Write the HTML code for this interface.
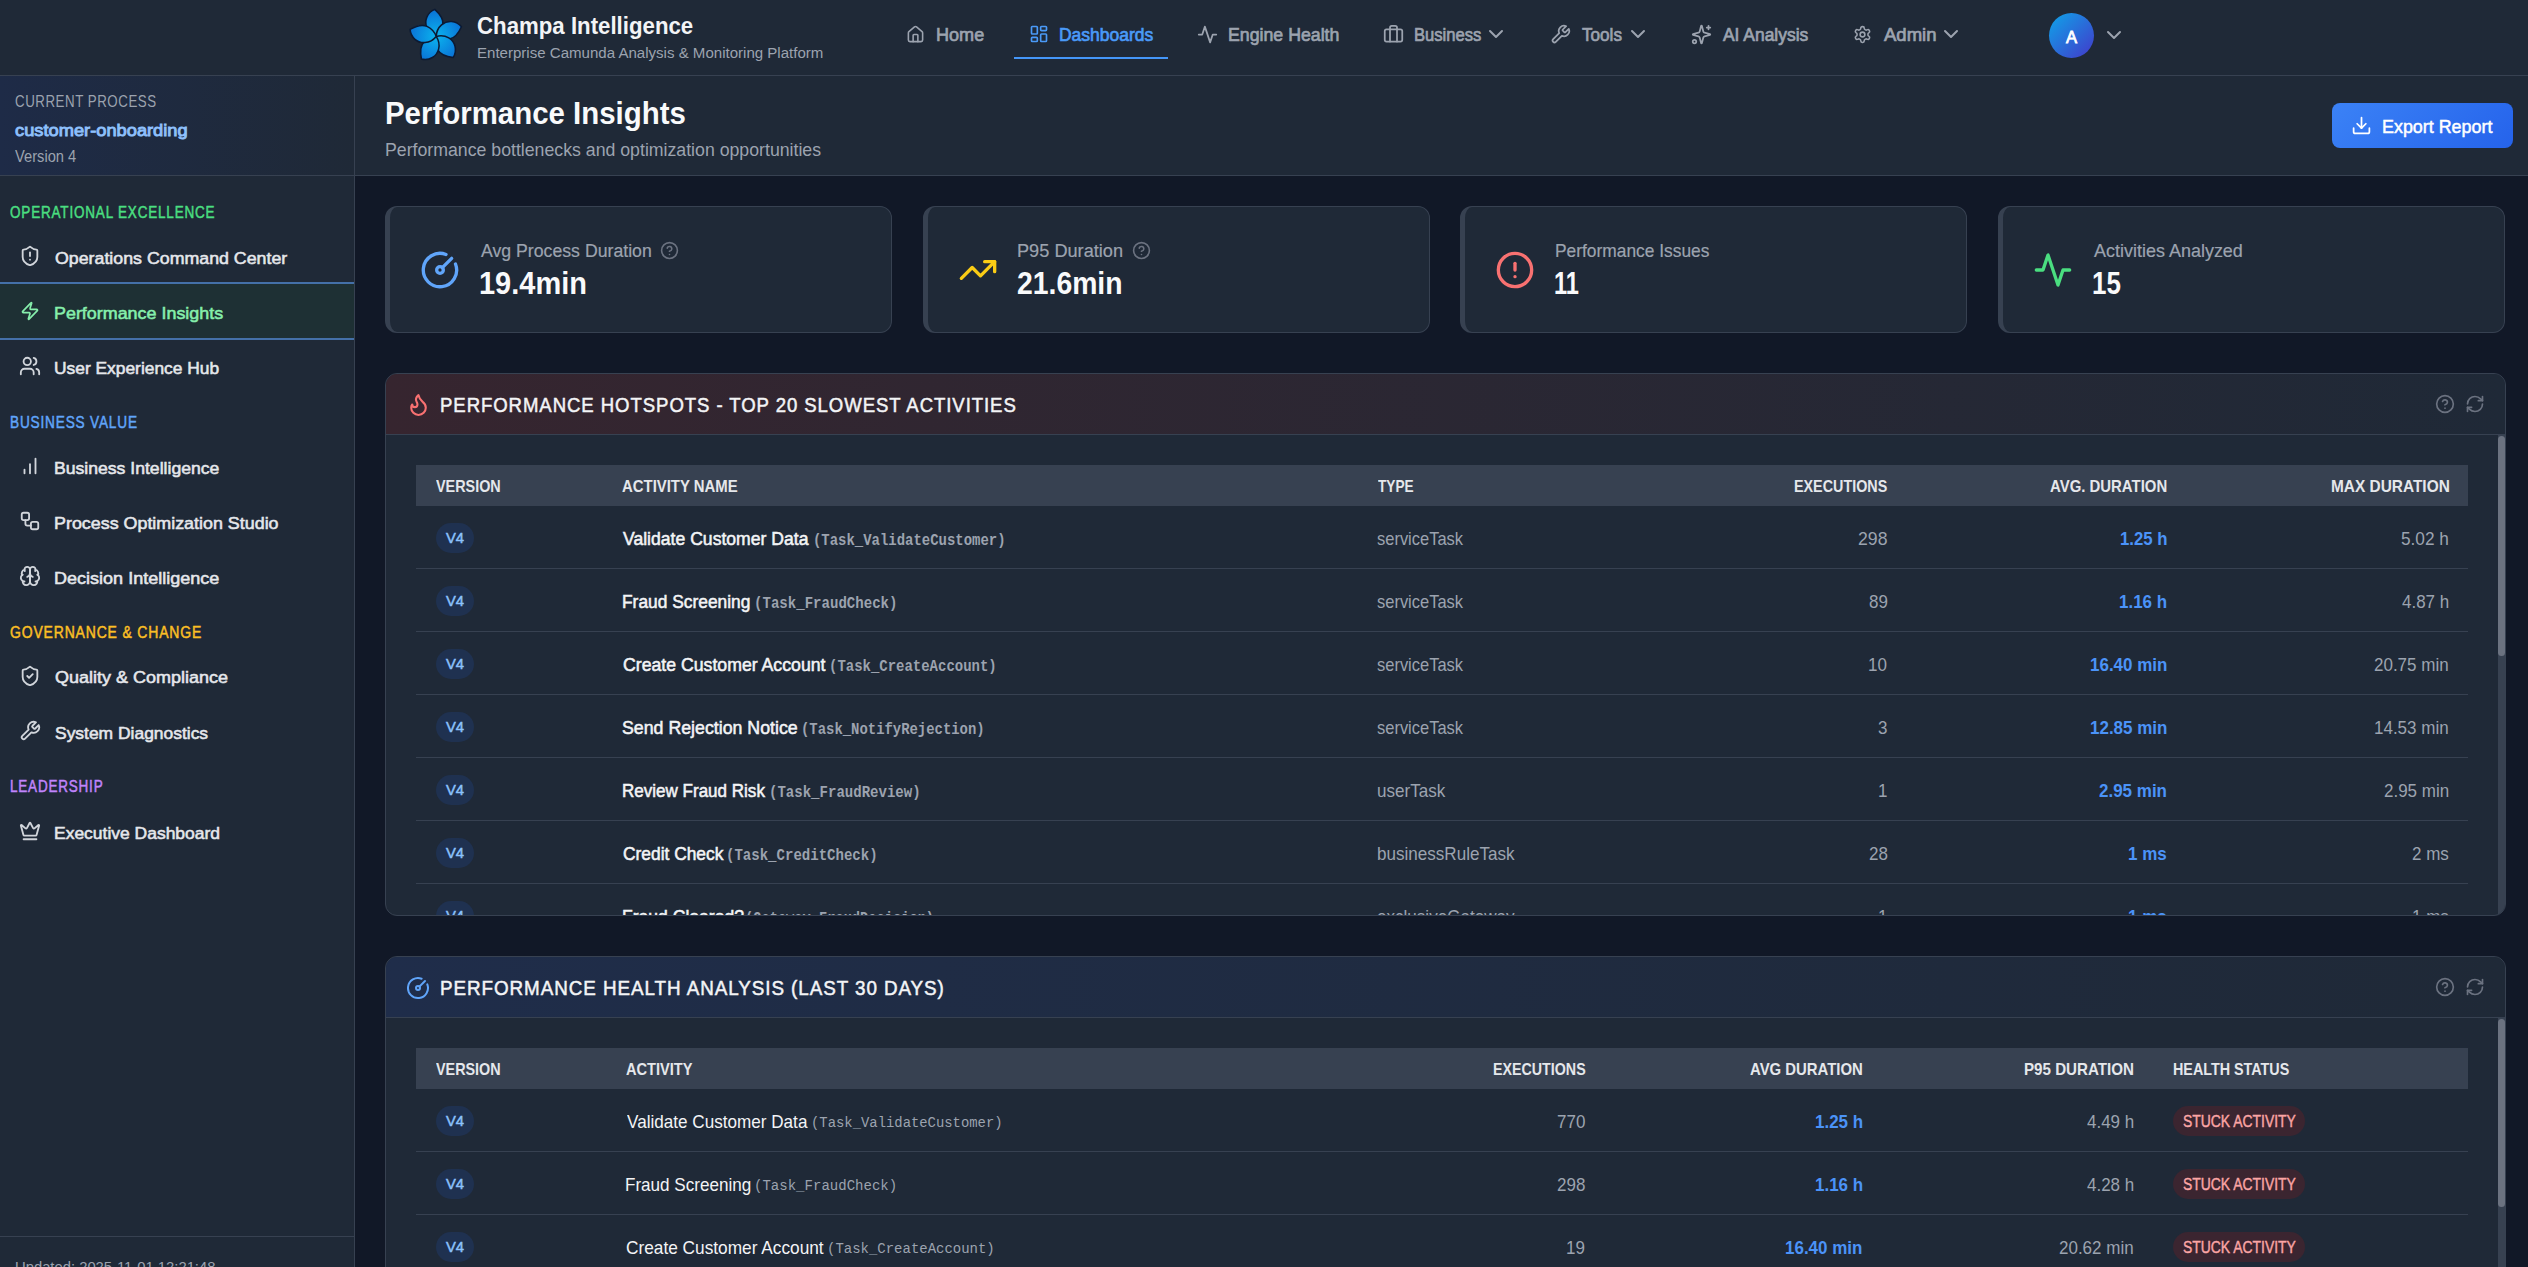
<!DOCTYPE html>
<html><head><meta charset="utf-8">
<style>
*{box-sizing:border-box;margin:0;padding:0}
html,body{width:2528px;height:1267px;overflow:hidden;background:#111827;font-family:"Liberation Sans",sans-serif;color:#f3f4f6}
.abs{position:absolute}
svg{display:block}
.ic{fill:none;stroke:currentColor;stroke-width:2;stroke-linecap:round;stroke-linejoin:round}
.t{position:absolute;white-space:nowrap;line-height:1}
/* top bar */
#top{position:absolute;left:0;top:0;width:2528px;height:76px;background:#1f2937;border-bottom:1px solid #374151}
.nav{position:absolute;top:0;height:75px;color:#9ca3af}
/* sidebar */
#side{position:absolute;left:0;top:76px;width:355px;height:1191px;background:#1f2937;border-right:1px solid #374151}
.sh{position:absolute;left:10px;font-weight:700;font-size:14.4px;white-space:nowrap;line-height:1}
.si{position:absolute;left:0;width:354px;height:54px}
.si svg{position:absolute;left:19px;top:15px;width:22px;height:22px;color:#d1d5db}
.si span{position:absolute;left:55px;top:19px;font-weight:700;font-size:16.4px;color:#e5e7eb;white-space:nowrap;line-height:1}
/* main */
#hdr{position:absolute;left:355px;top:76px;width:2173px;height:100px;background:#1f2937;border-bottom:1px solid #374151}
.kpi{position:absolute;top:206px;width:507px;height:127px;background:#1f2937;border:1px solid #374151;border-left:5px solid #374151;border-radius:12px}
.card{position:absolute;left:385px;width:2121px;background:#1f2937;border:1px solid #374151;border-radius:12px;overflow:hidden}
.chd{position:absolute;left:0;top:0;width:2119px;height:61px;border-bottom:1px solid #374151}
table{border-collapse:collapse;position:absolute;left:30px;width:2052px}
th{background:#374151;height:40px;border-bottom:1px solid #374151;font-size:14.4px;font-weight:700;color:#e5e7eb;text-align:left;padding:0 20px;white-space:nowrap}
td{height:63px;border-bottom:1px solid #374151;padding:5px 20px 0 20px;font-size:16.6px;color:#9ca3af;white-space:nowrap}
.r{text-align:right}
.badge{display:inline-block;vertical-align:middle;width:38px;height:30px;line-height:31px;border-radius:15px;background:#1f3150;color:#8cc2fc;font-weight:700;font-size:15px;text-align:center;position:relative;top:-2px}
.nm{font-weight:700;color:#f3f4f6;font-size:16.5px}
.nm2{color:#f3f4f6;font-size:17.1px}
.mono{font-family:"Liberation Mono",monospace;font-size:13.7px;font-weight:700;color:#9ca3af;margin-left:6px}
.blue{color:#60a5fa;font-weight:700}
.stuck{display:inline-block;vertical-align:middle;width:132px;text-align:center;height:29px;line-height:30px;border-radius:15px;background:#3f2430;color:#fca5a5;font-weight:700;font-size:13.9px;position:relative;top:-2px}
.tx{position:absolute;white-space:pre;line-height:1;transform-origin:0 0;font-family:"Liberation Sans",sans-serif}
.bdg{position:absolute;width:38px;height:30px;border-radius:15px;background:#1f3150}
.stk{position:absolute;width:132px;height:30px;border-radius:15px;background:#3b2530}
</style></head><body>

<!-- TOP BAR -->
<div id="top">
  <svg class="abs" style="left:405px;top:6px" width="62" height="62" viewBox="0 0 62 62">
    <defs><radialGradient id="pg" gradientUnits="userSpaceOnUse" cx="0" cy="0" r="27"><stop offset="0" stop-color="#0bb4ee"/><stop offset="1" stop-color="#0a6fd6"/></radialGradient></defs>
    <g transform="translate(31.2,30.4) rotate(-3) scale(1.04)" fill="url(#pg)" stroke="#0c1a33" stroke-width="1.5" stroke-linejoin="round">
      <path id="pet" d="M0,0 C-9,-4 -11,-13 -8,-19 C-6,-23 -3,-25 0,-26 C4,-22 8,-17 7,-11 C6,-6 3,-2 0,0Z"/>
      <use href="#pet" transform="rotate(72)"/>
      <use href="#pet" transform="rotate(144)"/>
      <use href="#pet" transform="rotate(216)"/>
      <use href="#pet" transform="rotate(288)"/>
    </g>
  </svg>

  <!-- nav items -->
  <svg class="abs ic" style="left:906px;top:25px;color:#9ca3af" width="19" height="19" viewBox="0 0 24 24" stroke-width="1.7"><path d="M15 21v-8a1 1 0 0 0-1-1h-4a1 1 0 0 0-1 1v8"/><path d="M3 10a2 2 0 0 1 .709-1.528l7-5.999a2 2 0 0 1 2.582 0l7 5.999A2 2 0 0 1 21 10v9a2 2 0 0 1-2 2H5a2 2 0 0 1-2-2z"/></svg>

  <svg class="abs ic" style="left:1029px;top:24px;color:#4a9af8" width="20" height="20" viewBox="0 0 24 24" stroke-width="1.7"><rect width="7" height="9" x="3" y="3" rx="1"/><rect width="7" height="5" x="14" y="3" rx="1"/><rect width="7" height="9" x="14" y="12" rx="1"/><rect width="7" height="5" x="3" y="16" rx="1"/></svg>
  <div class="abs" style="left:1014px;top:57px;width:154px;height:2px;background:#4496f8"></div>

  <svg class="abs ic" style="left:1197px;top:24px;color:#9ca3af" width="21" height="21" viewBox="0 0 24 24" stroke-width="1.7"><polyline points="22 12 18 12 15 21 9 3 6 12 2 12"/></svg>

  <svg class="abs ic" style="left:1383px;top:24px;color:#9ca3af" width="21" height="21" viewBox="0 0 24 24" stroke-width="1.7"><path d="M16 20V4a2 2 0 0 0-2-2h-4a2 2 0 0 0-2 2v16"/><rect width="20" height="14" x="2" y="6" rx="2"/></svg>
  <svg class="abs ic" style="left:1484px;top:22px;color:#9ca3af" width="24" height="24" stroke-width="1.7" viewBox="0 0 24 24"><path d="m6 9 6 6 6-6"/></svg>

  <svg class="abs ic" style="left:1550px;top:24px;color:#9ca3af" width="21" height="21" viewBox="0 0 24 24" stroke-width="1.7"><path d="M14.7 6.3a1 1 0 0 0 0 1.4l1.6 1.6a1 1 0 0 0 1.4 0l3.77-3.77a6 6 0 0 1-7.94 7.94l-6.91 6.91a2.12 2.12 0 0 1-3-3l6.91-6.91a6 6 0 0 1 7.94-7.94l-3.76 3.76z"/></svg>
  <svg class="abs ic" style="left:1626px;top:22px;color:#9ca3af" width="24" height="24" stroke-width="1.7" viewBox="0 0 24 24"><path d="m6 9 6 6 6-6"/></svg>

  <svg class="abs ic" style="left:1691px;top:24px;color:#9ca3af" width="21" height="21" viewBox="0 0 24 24" stroke-width="1.7"><path d="M9.937 15.5A2 2 0 0 0 8.5 14.063l-6.135-1.582a.5.5 0 0 1 0-.962L8.5 9.936A2 2 0 0 0 9.937 8.5l1.582-6.135a.5.5 0 0 1 .963 0L14.063 8.5A2 2 0 0 0 15.5 9.937l6.135 1.581a.5.5 0 0 1 0 .964L15.5 14.063a2 2 0 0 0-1.437 1.437l-1.582 6.135a.5.5 0 0 1-.963 0z"/><path d="M20 2v4"/><path d="M22 4h-4"/><circle cx="4" cy="20" r="2"/></svg>

  <svg class="abs ic" style="left:1853px;top:25px;color:#9ca3af" width="19" height="19" viewBox="0 0 24 24" stroke-width="1.7"><path d="M12.22 2h-.44a2 2 0 0 0-2 2v.18a2 2 0 0 1-1 1.73l-.43.25a2 2 0 0 1-2 0l-.15-.08a2 2 0 0 0-2.73.73l-.22.38a2 2 0 0 0 .73 2.73l.15.1a2 2 0 0 1 1 1.72v.51a2 2 0 0 1-1 1.74l-.15.09a2 2 0 0 0-.73 2.730l.22.38a2 2 0 0 0 2.73.73l.15-.08a2 2 0 0 1 2 0l.43.25a2 2 0 0 1 1 1.73V20a2 2 0 0 0 2 2h.44a2 2 0 0 0 2-2v-.18a2 2 0 0 1 1-1.73l.43-.25a2 2 0 0 1 2 0l.15.08a2 2 0 0 0 2.73-.73l.22-.39a2 2 0 0 0-.73-2.73l-.15-.08a2 2 0 0 1-1-1.74v-.5a2 2 0 0 1 1-1.74l.15-.09a2 2 0 0 0 .73-2.73l-.22-.38a2 2 0 0 0-2.73-.73l-.15.08a2 2 0 0 1-2 0l-.43-.25a2 2 0 0 1-1-1.73V4a2 2 0 0 0-2-2z"/><circle cx="12" cy="12" r="3"/></svg>
  <svg class="abs ic" style="left:1939px;top:22px;color:#9ca3af" width="24" height="24" stroke-width="1.7" viewBox="0 0 24 24"><path d="m6 9 6 6 6-6"/></svg>

  <div class="abs" style="left:2049px;top:13px;width:45px;height:45px;border-radius:50%;background:linear-gradient(135deg,#0ea5e9,#4338ca);color:#fff;font-weight:700;font-size:17px;text-align:center;line-height:45px"></div>
  <svg class="abs ic" style="left:2102px;top:23px;color:#9ca3af" width="24" height="24" stroke-width="1.7" viewBox="0 0 24 24"><path d="m6 9 6 6 6-6"/></svg>
</div>

<!-- SIDEBAR -->
<div id="side">
  <div class="abs" style="left:0;top:0;width:354px;height:100px;background:linear-gradient(90deg,#1e2b47 0%,#1f2937 100%);border-bottom:1px solid #374151"></div>
  <div class="si" style="top:154px"><svg class="ic" viewBox="0 0 24 24"><path d="M20 13c0 5-3.5 7.5-7.66 8.95a1 1 0 0 1-.67-.01C7.5 20.5 4 18 4 13V6a1 1 0 0 1 1-1c2 0 4.5-1.2 6.240-2.72a1.17 1.17 0 0 1 1.52 0C14.51 3.81 17 5 19 5a1 1 0 0 1 1 1z"/><path d="M12 8v4"/><path d="M12 16h.01"/></svg></div>
  <div class="si" style="top:206px;background:#1e3034;border-top:2px solid #4470a8;border-bottom:2px solid #4470a8;height:58px"><svg class="ic" style="color:#86efac;top:17px;left:20px;width:20px;height:20px" viewBox="0 0 24 24"><path d="M4 14a1 1 0 0 1-.78-1.63l9.9-10.2a.5.5 0 0 1 .86.46l-1.92 6.02A1 1 0 0 0 13 10h7a1 1 0 0 1 .78 1.63l-9.9 10.2a.5.5 0 0 1-.86-.46l1.92-6.02A1 1 0 0 0 11 14z"/></svg></div>
  <div class="si" style="top:264px"><svg class="ic" viewBox="0 0 24 24"><path d="M16 21v-2a4 4 0 0 0-4-4H6a4 4 0 0 0-4 4v2"/><circle cx="9" cy="7" r="4"/><path d="M22 21v-2a4 4 0 0 0-3-3.87"/><path d="M16 3.13a4 4 0 0 1 0 7.75"/></svg></div>
  <div class="si" style="top:364px"><svg class="ic" viewBox="0 0 24 24"><line x1="12" x2="12" y1="20" y2="10"/><line x1="18" x2="18" y1="20" y2="4"/><line x1="6" x2="6" y1="20" y2="16"/></svg></div>
  <div class="si" style="top:419px"><svg class="ic" viewBox="0 0 24 24"><rect width="8" height="8" x="3" y="3" rx="2"/><path d="M7 11v4a2 2 0 0 0 2 2h4"/><rect width="8" height="8" x="13" y="13" rx="2"/></svg></div>
  <div class="si" style="top:474px"><svg class="ic" viewBox="0 0 24 24"><path d="M12 5a3 3 0 1 0-5.997.125 4 4 0 0 0-2.526 5.77 4 4 0 0 0 .556 6.588A4 4 0 1 0 12 18Z"/><path d="M12 5a3 3 0 1 1 5.997.125 4 4 0 0 1 2.526 5.77 4 4 0 0 1-.556 6.588A4 4 0 1 1 12 18Z"/><path d="M15 13a4.5 4.5 0 0 1-3-4 4.5 4.5 0 0 1-3 4"/><path d="M17.599 6.5a3 3 0 0 0 .399-1.375"/><path d="M6.003 5.125A3 3 0 0 0 6.401 6.5"/><path d="M3.477 10.896a4 4 0 0 1 .585-.396"/><path d="M19.938 10.5a4 4 0 0 1 .585.396"/><path d="M6 18a4 4 0 0 1-1.967-.516"/><path d="M19.967 17.484A4 4 0 0 1 18 18"/><path d="M12 9v9"/></svg></div>
  <div class="si" style="top:574px"><svg class="ic" viewBox="0 0 24 24"><path d="M20 13c0 5-3.5 7.5-7.66 8.95a1 1 0 0 1-.67-.01C7.5 20.5 4 18 4 13V6a1 1 0 0 1 1-1c2 0 4.5-1.2 6.24-2.72a1.17 1.17 0 0 1 1.52 0C14.51 3.81 17 5 19 5a1 1 0 0 1 1 1z"/><path d="m9 12 2 2 4-4"/></svg></div>
  <div class="si" style="top:629px"><svg class="ic" viewBox="0 0 24 24"><path d="M14.7 6.3a1 1 0 0 0 0 1.4l1.6 1.6a1 1 0 0 0 1.4 0l3.77-3.770a6 6 0 0 1-7.94 7.94l-6.91 6.91a2.12 2.12 0 0 1-3-3l6.91-6.91a6 6 0 0 1 7.94-7.94l-3.76 3.76z"/></svg></div>
  <div class="si" style="top:729px"><svg class="ic" viewBox="0 0 24 24"><path d="M11.562 3.266a.5.5 0 0 1 .876 0L15.39 8.87a1 1 0 0 0 1.516.294L21.183 5.5a.5.5 0 0 1 .798.519l-2.834 10.246a1 1 0 0 1-.956.734H5.81a1 1 0 0 1-.957-.734L2.02 6.02a.5.5 0 0 1 .798-.519l4.276 3.664a1 1 0 0 0 1.516-.294z"/><path d="M5 21h14"/></svg></div>

  <div class="abs" style="left:0;top:1160px;width:354px;height:1px;background:#374151"></div>
</div>

<!-- MAIN HEADER -->
<div id="hdr">
  <div class="abs" style="left:1977px;top:27px;width:181px;height:45px;border-radius:8px;background:linear-gradient(135deg,#3b82f6,#2563eb)">
    <svg class="abs ic" style="left:19px;top:12px;color:#fff" width="21" height="21" viewBox="0 0 24 24"><path d="M21 15v4a2 2 0 0 1-2 2H5a2 2 0 0 1-2-2v-4"/><polyline points="7 10 12 15 17 10"/><line x1="12" x2="12" y1="15" y2="3"/></svg>
  </div>
</div>

<!-- KPI CARDS -->
<div class="kpi" style="left:385px">
  <svg class="abs ic" style="left:30px;top:43px;color:#60a5fa" width="40" height="40" viewBox="0 0 24 24"><path d="M15.6 2.7a10 10 0 1 0 5.7 5.7"/><circle cx="12" cy="12" r="2"/><path d="M13.4 10.6 19 5"/></svg>
  <svg class="abs ic" style="left:270px;top:34px;color:#6b7280" width="19" height="19" viewBox="0 0 24 24" stroke-width="1.6"><circle cx="12" cy="12" r="10"/><path d="M9.09 9a3 3 0 0 1 5.83 1c0 2-3 3-3 3"/><path d="M12 17h.01"/></svg>
</div>
<div class="kpi" style="left:923px">
  <svg class="abs ic" style="left:30px;top:43px;color:#facc15" width="40" height="40" viewBox="0 0 24 24"><polyline points="22 7 13.5 15.5 8.5 10.5 2 17"/><polyline points="16 7 22 7 22 13"/></svg>
  <svg class="abs ic" style="left:204px;top:34px;color:#6b7280" width="19" height="19" viewBox="0 0 24 24" stroke-width="1.6"><circle cx="12" cy="12" r="10"/><path d="M9.09 9a3 3 0 0 1 5.83 1c0 2-3 3-3 3"/><path d="M12 17h.01"/></svg>
</div>
<div class="kpi" style="left:1460px">
  <svg class="abs ic" style="left:30px;top:43px;color:#f87171" width="40" height="40" viewBox="0 0 24 24"><circle cx="12" cy="12" r="10"/><line x1="12" x2="12" y1="8" y2="12"/><line x1="12" x2="12.01" y1="16" y2="16"/></svg>
</div>
<div class="kpi" style="left:1998px">
  <svg class="abs ic" style="left:30px;top:43px;color:#4ade80" width="40" height="40" viewBox="0 0 24 24"><polyline points="22 12 18 12 15 21 9 3 6 12 2 12"/></svg>
</div>

<!-- HOTSPOTS -->
<div class="card" style="top:373px;height:543px">
  <div class="chd" style="background:linear-gradient(90deg,#36252f 0%,#1f2937 100%)">
    <svg class="abs ic" style="left:20px;top:18px;color:#f87171" width="25" height="25" viewBox="0 0 24 24" stroke-width="1.75"><path d="M8.5 14.5A2.5 2.5 0 0 0 11 12c0-1.380-.5-2-1-3-1.072-2.143-.224-4.054 2-6 .5 2.5 2 4.9 4 6.5 2 1.6 3 3.5 3 5.5a7 7 0 1 1-14 0c0-1.153.433-2.294 1-3a2.5 2.5 0 0 0 2.5 2.5z"/></svg>
    <svg class="abs ic" style="left:2049px;top:20px;color:#6b7280" width="20" height="20" viewBox="0 0 24 24" stroke-width="1.6"><circle cx="12" cy="12" r="10"/><path d="M9.09 9a3 3 0 0 1 5.83 1c0 2-3 3-3 3"/><path d="M12 17h.01"/></svg>
    <svg class="abs ic" style="left:2079px;top:20px;color:#6b7280" width="20" height="20" viewBox="0 0 24 24" stroke-width="1.8"><path d="M3 12a9 9 0 0 1 9-9 9.75 9.75 0 0 1 6.74 2.74L21 8"/><path d="M21 3v5h-5"/><path d="M21 12a9 9 0 0 1-9 9 9.75 9.75 0 0 1-6.74-2.74L3 16"/><path d="M8 16H3v5"/></svg>
  </div>
  <div class="abs" style="left:2112px;top:61px;width:7px;height:481px;background:#374151"></div>
  <div class="abs" style="left:2112px;top:62px;width:7px;height:220px;border-radius:4px;background:#6b7280"></div>
<div class="abs" style="left:30px;top:91px;width:2052px;height:41px;background:#374151"></div>
<div class="abs" style="left:30px;top:194px;width:2052px;height:1px;background:#374151"></div>
<div class="abs" style="left:30px;top:257px;width:2052px;height:1px;background:#374151"></div>
<div class="abs" style="left:30px;top:320px;width:2052px;height:1px;background:#374151"></div>
<div class="abs" style="left:30px;top:383px;width:2052px;height:1px;background:#374151"></div>
<div class="abs" style="left:30px;top:446px;width:2052px;height:1px;background:#374151"></div>
<div class="abs" style="left:30px;top:509px;width:2052px;height:1px;background:#374151"></div>
<div class="abs" style="left:30px;top:572px;width:2052px;height:1px;background:#374151"></div>
<div class="bdg" style="left:50px;top:149px"></div>
<div class="bdg" style="left:50px;top:212px"></div>
<div class="bdg" style="left:50px;top:275px"></div>
<div class="bdg" style="left:50px;top:338px"></div>
<div class="bdg" style="left:50px;top:401px"></div>
<div class="bdg" style="left:50px;top:464px"></div>
<div class="bdg" style="left:50px;top:527px"></div>

  
</div>

<!-- HEALTH -->
<div class="card" style="top:956px;height:340px">
  <div class="chd" style="background:linear-gradient(90deg,#1f2d4a 0%,#1f2937 100%)">
    <svg class="abs ic" style="left:20px;top:19px;color:#60a5fa" width="24" height="24" viewBox="0 0 24 24"><path d="M15.6 2.7a10 10 0 1 0 5.7 5.7"/><circle cx="12" cy="12" r="2"/><path d="M13.4 10.6 19 5"/></svg>
    <svg class="abs ic" style="left:2049px;top:20px;color:#6b7280" width="20" height="20" viewBox="0 0 24 24" stroke-width="1.6"><circle cx="12" cy="12" r="10"/><path d="M9.09 9a3 3 0 0 1 5.83 1c0 2-3 3-3 3"/><path d="M12 17h.01"/></svg>
    <svg class="abs ic" style="left:2079px;top:20px;color:#6b7280" width="20" height="20" viewBox="0 0 24 24" stroke-width="1.8"><path d="M3 12a9 9 0 0 1 9-9 9.75 9.75 0 0 1 6.74 2.74L21 8"/><path d="M21 3v5h-5"/><path d="M21 12a9 9 0 0 1-9 9 9.75 9.75 0 0 1-6.74-2.74L3 16"/><path d="M8 16H3v5"/></svg>
  </div>
  <div class="abs" style="left:2112px;top:61px;width:7px;height:280px;background:#374151"></div>
  <div class="abs" style="left:2112px;top:62px;width:7px;height:188px;border-radius:4px;background:#6b7280"></div>
<div class="abs" style="left:30px;top:91px;width:2052px;height:41px;background:#374151"></div>
<div class="abs" style="left:30px;top:194px;width:2052px;height:1px;background:#374151"></div>
<div class="abs" style="left:30px;top:257px;width:2052px;height:1px;background:#374151"></div>
<div class="abs" style="left:30px;top:320px;width:2052px;height:1px;background:#374151"></div>
<div class="bdg" style="left:50px;top:149px"></div>
<div class="stk" style="left:1787px;top:149px"></div>
<div class="bdg" style="left:50px;top:212px"></div>
<div class="stk" style="left:1787px;top:212px"></div>
<div class="bdg" style="left:50px;top:275px"></div>
<div class="stk" style="left:1787px;top:275px"></div>

  
</div>

<div class="tx" style="left:476.66px;top:14.20px;font-size:24.128px;font-weight:700;color:#f3f4f6;transform:scaleX(0.9223)">Champa Intelligence</div>
<div class="tx" style="left:476.55px;top:45.35px;font-size:15.368px;font-weight:400;color:#9ca3af;transform:scaleX(0.9800)">Enterprise Camunda Analysis &amp; Monitoring Platform</div>
<div class="tx" style="left:936.08px;top:26.00px;font-size:18.895px;font-weight:400;color:#9ca3af;-webkit-text-stroke:0.70px #9ca3af;transform:scaleX(0.9571)">Home</div>
<div class="tx" style="left:1058.91px;top:26.00px;font-size:18.895px;font-weight:400;color:#4a9af8;-webkit-text-stroke:0.70px #4a9af8;transform:scaleX(0.9255)">Dashboards</div>
<div class="tx" style="left:1227.50px;top:26.00px;font-size:18.895px;font-weight:400;color:#9ca3af;-webkit-text-stroke:0.70px #9ca3af;transform:scaleX(0.9396)">Engine Health</div>
<div class="tx" style="left:1414.16px;top:26.00px;font-size:18.895px;font-weight:400;color:#9ca3af;-webkit-text-stroke:0.70px #9ca3af;transform:scaleX(0.8796)">Business</div>
<div class="tx" style="left:1582.09px;top:26.00px;font-size:18.895px;font-weight:400;color:#9ca3af;-webkit-text-stroke:0.70px #9ca3af;transform:scaleX(0.9067)">Tools</div>
<div class="tx" style="left:1723.23px;top:26.00px;font-size:18.895px;font-weight:400;color:#9ca3af;-webkit-text-stroke:0.70px #9ca3af;transform:scaleX(0.9233)">AI Analysis</div>
<div class="tx" style="left:1883.95px;top:26.00px;font-size:18.895px;font-weight:400;color:#9ca3af;-webkit-text-stroke:0.70px #9ca3af;transform:scaleX(0.9816)">Admin</div>
<div class="tx" style="left:2066.23px;top:29.50px;font-size:16.930px;font-weight:400;color:#ffffff;-webkit-text-stroke:0.80px #ffffff;transform:scaleX(0.9792)">A</div>
<div class="tx" style="left:14.55px;top:93.45px;font-size:16.134px;font-weight:400;color:#9ca3af;letter-spacing:0.04em;transform:scaleX(0.8256)">CURRENT PROCESS</div>
<div class="tx" style="left:15.23px;top:121.55px;font-size:17.063px;font-weight:400;color:#8ec0fc;-webkit-text-stroke:0.90px #8ec0fc;transform:scaleX(1.0719)">customer-onboarding</div>
<div class="tx" style="left:15.23px;top:149.40px;font-size:15.988px;font-weight:400;color:#9ca3af;transform:scaleX(0.9197)">Version 4</div>
<div class="tx" style="left:9.84px;top:203.70px;font-size:16.279px;font-weight:400;color:#4ade80;letter-spacing:0.06em;-webkit-text-stroke:0.50px #4ade80;transform:scaleX(0.8301)">OPERATIONAL EXCELLENCE</div>
<div class="tx" style="left:9.54px;top:413.70px;font-size:16.279px;font-weight:400;color:#60a5fa;letter-spacing:0.06em;-webkit-text-stroke:0.50px #60a5fa;transform:scaleX(0.8377)">BUSINESS VALUE</div>
<div class="tx" style="left:9.79px;top:623.60px;font-size:16.279px;font-weight:400;color:#fbbf24;letter-spacing:0.06em;-webkit-text-stroke:0.50px #fbbf24;transform:scaleX(0.8587)">GOVERNANCE &amp; CHANGE</div>
<div class="tx" style="left:9.55px;top:778.40px;font-size:16.279px;font-weight:400;color:#c084fc;letter-spacing:0.06em;-webkit-text-stroke:0.50px #c084fc;transform:scaleX(0.8284)">LEADERSHIP</div>
<div class="tx" style="left:54.81px;top:249.50px;font-size:17.215px;font-weight:400;color:#e5e7eb;-webkit-text-stroke:0.55px #e5e7eb;transform:scaleX(1.0335)">Operations Command Center</div>
<div class="tx" style="left:54.43px;top:304.50px;font-size:17.215px;font-weight:400;color:#86efac;-webkit-text-stroke:0.55px #86efac;transform:scaleX(1.0406)">Performance Insights</div>
<div class="tx" style="left:54.49px;top:359.50px;font-size:17.215px;font-weight:400;color:#e5e7eb;-webkit-text-stroke:0.55px #e5e7eb;transform:scaleX(1.0100)">User Experience Hub</div>
<div class="tx" style="left:54.45px;top:459.50px;font-size:17.215px;font-weight:400;color:#e5e7eb;-webkit-text-stroke:0.55px #e5e7eb;transform:scaleX(1.0231)">Business Intelligence</div>
<div class="tx" style="left:54.43px;top:514.60px;font-size:17.215px;font-weight:400;color:#e5e7eb;-webkit-text-stroke:0.55px #e5e7eb;transform:scaleX(1.0391)">Process Optimization Studio</div>
<div class="tx" style="left:54.43px;top:569.50px;font-size:17.215px;font-weight:400;color:#e5e7eb;-webkit-text-stroke:0.55px #e5e7eb;transform:scaleX(1.0479)">Decision Intelligence</div>
<div class="tx" style="left:54.80px;top:669.40px;font-size:17.215px;font-weight:400;color:#e5e7eb;-webkit-text-stroke:0.55px #e5e7eb;transform:scaleX(1.0455)">Quality &amp; Compliance</div>
<div class="tx" style="left:54.82px;top:724.50px;font-size:17.215px;font-weight:400;color:#e5e7eb;-webkit-text-stroke:0.55px #e5e7eb;transform:scaleX(1.0134)">System Diagnostics</div>
<div class="tx" style="left:54.46px;top:824.70px;font-size:17.215px;font-weight:400;color:#e5e7eb;-webkit-text-stroke:0.55px #e5e7eb;transform:scaleX(1.0152)">Executive Dashboard</div>
<div class="tx" style="left:14.79px;top:1258.95px;font-size:15.262px;font-weight:400;color:#9ca3af;transform:scaleX(0.9701)">Updated: 2025-11-01 12:21:48</div>
<div class="tx" style="left:384.56px;top:97.60px;font-size:30.523px;font-weight:700;color:#f9fafb;transform:scaleX(0.9640)">Performance Insights</div>
<div class="tx" style="left:384.92px;top:140.80px;font-size:18.892px;font-weight:400;color:#9ca3af;transform:scaleX(0.9382)">Performance bottlenecks and optimization opportunities</div>
<div class="tx" style="left:2382.09px;top:118.20px;font-size:18.895px;font-weight:400;color:#ffffff;-webkit-text-stroke:0.50px #ffffff;transform:scaleX(0.9478)">Export Report</div>
<div class="tx" style="left:480.59px;top:242.15px;font-size:18.459px;font-weight:400;color:#9ca3af;-webkit-text-stroke:0.20px #9ca3af;transform:scaleX(0.9593)">Avg Process Duration</div>
<div class="tx" style="left:1017.02px;top:242.15px;font-size:18.459px;font-weight:400;color:#9ca3af;-webkit-text-stroke:0.20px #9ca3af;transform:scaleX(0.9857)">P95 Duration</div>
<div class="tx" style="left:1554.87px;top:242.15px;font-size:18.459px;font-weight:400;color:#9ca3af;-webkit-text-stroke:0.20px #9ca3af;transform:scaleX(0.9417)">Performance Issues</div>
<div class="tx" style="left:2094.09px;top:242.15px;font-size:18.459px;font-weight:400;color:#9ca3af;-webkit-text-stroke:0.20px #9ca3af;transform:scaleX(0.9749)">Activities Analyzed</div>
<div class="tx" style="left:478.75px;top:268.45px;font-size:31.250px;font-weight:700;color:#f9fafb;transform:scaleX(0.9272)">19.4min</div>
<div class="tx" style="left:1017.17px;top:268.45px;font-size:31.250px;font-weight:700;color:#f9fafb;transform:scaleX(0.9069)">21.6min</div>
<div class="tx" style="left:1554.38px;top:268.45px;font-size:31.250px;font-weight:700;color:#f9fafb;transform:scaleX(0.7545)">11</div>
<div class="tx" style="left:2092.44px;top:268.45px;font-size:31.250px;font-weight:700;color:#f9fafb;transform:scaleX(0.8304)">15</div>
<div class="tx" style="left:440.31px;top:395.00px;font-size:20.640px;font-weight:400;color:#f3f4f6;letter-spacing:0.05em;-webkit-text-stroke:0.50px #f3f4f6;transform:scaleX(0.9004)">PERFORMANCE HOTSPOTS - TOP 20 SLOWEST ACTIVITIES</div>
<div class="tx" style="left:440.19px;top:978.00px;font-size:20.640px;font-weight:400;color:#f3f4f6;letter-spacing:0.05em;-webkit-text-stroke:0.50px #f3f4f6;transform:scaleX(0.9129)">PERFORMANCE HEALTH ANALYSIS (LAST 30 DAYS)</div>
<div class="tx" style="left:436.13px;top:478.60px;font-size:16.919px;font-weight:700;color:#e5e7eb;transform:scaleX(0.8505)">VERSION</div>
<div class="tx" style="left:622.45px;top:478.60px;font-size:16.919px;font-weight:700;color:#e5e7eb;transform:scaleX(0.8819)">ACTIVITY NAME</div>
<div class="tx" style="left:1378.03px;top:478.60px;font-size:16.919px;font-weight:700;color:#e5e7eb;transform:scaleX(0.8079)">TYPE</div>
<div class="tx" style="left:1794.21px;top:478.60px;font-size:16.919px;font-weight:700;color:#e5e7eb;transform:scaleX(0.8480)">EXECUTIONS</div>
<div class="tx" style="left:2050.15px;top:478.60px;font-size:16.919px;font-weight:700;color:#e5e7eb;transform:scaleX(0.8829)">AVG. DURATION</div>
<div class="tx" style="left:2330.75px;top:478.60px;font-size:16.919px;font-weight:700;color:#e5e7eb;transform:scaleX(0.9121)">MAX DURATION</div>
<div class="tx" style="left:436.13px;top:1061.60px;font-size:16.860px;font-weight:700;color:#e5e7eb;transform:scaleX(0.8521)">VERSION</div>
<div class="tx" style="left:625.76px;top:1061.60px;font-size:16.860px;font-weight:700;color:#e5e7eb;transform:scaleX(0.8654)">ACTIVITY</div>
<div class="tx" style="left:1492.51px;top:1061.60px;font-size:16.860px;font-weight:700;color:#e5e7eb;transform:scaleX(0.8452)">EXECUTIONS</div>
<div class="tx" style="left:1749.75px;top:1061.60px;font-size:16.860px;font-weight:700;color:#e5e7eb;transform:scaleX(0.8838)">AVG DURATION</div>
<div class="tx" style="left:2023.96px;top:1061.60px;font-size:16.860px;font-weight:700;color:#e5e7eb;transform:scaleX(0.8982)">P95 DURATION</div>
<div class="tx" style="left:2172.61px;top:1061.60px;font-size:16.860px;font-weight:700;color:#e5e7eb;transform:scaleX(0.8501)">HEALTH STATUS</div>
<div class="tx" style="left:445.93px;top:530.40px;font-size:15.509px;font-weight:400;color:#8cc2fc;-webkit-text-stroke:0.50px #8cc2fc;transform:scaleX(0.9539)">V4</div>
<div class="tx" style="left:623.34px;top:529.80px;font-size:18.895px;font-weight:400;color:#f3f4f6;-webkit-text-stroke:0.55px #f3f4f6;transform:scaleX(0.9320)">Validate Customer Data</div>
<div class="tx" style="left:813.14px;top:534.05px;font-size:15.933px;font-weight:700;color:#9ca3af;font-family:&quot;Liberation Mono&quot;,monospace;transform:scaleX(0.8762)">(Task_ValidateCustomer)</div>
<div class="tx" style="left:1377.31px;top:528.90px;font-size:19.186px;font-weight:400;color:#9ca3af;transform:scaleX(0.8593)">serviceTask</div>
<div class="tx" style="left:1857.78px;top:530.00px;font-size:18.892px;font-weight:400;color:#9ca3af;transform:scaleX(0.9352)">298</div>
<div class="tx" style="left:2119.75px;top:530.00px;font-size:18.892px;font-weight:700;color:#4b93f8;transform:scaleX(0.8895)">1.25 h</div>
<div class="tx" style="left:2401.12px;top:530.00px;font-size:18.892px;font-weight:400;color:#9ca3af;transform:scaleX(0.9126)">5.02 h</div>
<div class="tx" style="left:445.93px;top:593.40px;font-size:15.509px;font-weight:400;color:#8cc2fc;-webkit-text-stroke:0.50px #8cc2fc;transform:scaleX(0.9539)">V4</div>
<div class="tx" style="left:622.31px;top:592.80px;font-size:18.895px;font-weight:400;color:#f3f4f6;-webkit-text-stroke:0.55px #f3f4f6;transform:scaleX(0.9199)">Fraud Screening</div>
<div class="tx" style="left:754.42px;top:597.05px;font-size:15.933px;font-weight:700;color:#9ca3af;font-family:&quot;Liberation Mono&quot;,monospace;transform:scaleX(0.8831)">(Task_FraudCheck)</div>
<div class="tx" style="left:1377.31px;top:591.90px;font-size:19.186px;font-weight:400;color:#9ca3af;transform:scaleX(0.8593)">serviceTask</div>
<div class="tx" style="left:1868.60px;top:593.00px;font-size:18.892px;font-weight:400;color:#9ca3af;transform:scaleX(0.9000)">89</div>
<div class="tx" style="left:2119.19px;top:593.00px;font-size:18.892px;font-weight:700;color:#4b93f8;transform:scaleX(0.9000)">1.16 h</div>
<div class="tx" style="left:2401.77px;top:593.00px;font-size:18.892px;font-weight:400;color:#9ca3af;transform:scaleX(0.9000)">4.87 h</div>
<div class="tx" style="left:445.93px;top:656.40px;font-size:15.509px;font-weight:400;color:#8cc2fc;-webkit-text-stroke:0.50px #8cc2fc;transform:scaleX(0.9539)">V4</div>
<div class="tx" style="left:622.56px;top:655.80px;font-size:18.895px;font-weight:400;color:#f3f4f6;-webkit-text-stroke:0.55px #f3f4f6;transform:scaleX(0.9369)">Create Customer Account</div>
<div class="tx" style="left:828.94px;top:660.05px;font-size:15.933px;font-weight:700;color:#9ca3af;font-family:&quot;Liberation Mono&quot;,monospace;transform:scaleX(0.8775)">(Task_CreateAccount)</div>
<div class="tx" style="left:1377.31px;top:654.90px;font-size:19.186px;font-weight:400;color:#9ca3af;transform:scaleX(0.8593)">serviceTask</div>
<div class="tx" style="left:1868.48px;top:656.00px;font-size:18.892px;font-weight:400;color:#9ca3af;transform:scaleX(0.9000)">10</div>
<div class="tx" style="left:2089.80px;top:656.00px;font-size:18.892px;font-weight:700;color:#4b93f8;transform:scaleX(0.9000)">16.40 min</div>
<div class="tx" style="left:2374.14px;top:656.00px;font-size:18.892px;font-weight:400;color:#9ca3af;transform:scaleX(0.9000)">20.75 min</div>
<div class="tx" style="left:445.93px;top:719.40px;font-size:15.509px;font-weight:400;color:#8cc2fc;-webkit-text-stroke:0.50px #8cc2fc;transform:scaleX(0.9539)">V4</div>
<div class="tx" style="left:622.49px;top:718.80px;font-size:18.895px;font-weight:400;color:#f3f4f6;-webkit-text-stroke:0.55px #f3f4f6;transform:scaleX(0.9405)">Send Rejection Notice</div>
<div class="tx" style="left:801.05px;top:723.05px;font-size:15.933px;font-weight:700;color:#9ca3af;font-family:&quot;Liberation Mono&quot;,monospace;transform:scaleX(0.8737)">(Task_NotifyRejection)</div>
<div class="tx" style="left:1377.31px;top:717.90px;font-size:19.186px;font-weight:400;color:#9ca3af;transform:scaleX(0.8593)">serviceTask</div>
<div class="tx" style="left:1877.78px;top:719.00px;font-size:18.892px;font-weight:400;color:#9ca3af;transform:scaleX(0.9000)">3</div>
<div class="tx" style="left:2089.80px;top:719.00px;font-size:18.892px;font-weight:700;color:#4b93f8;transform:scaleX(0.9000)">12.85 min</div>
<div class="tx" style="left:2374.14px;top:719.00px;font-size:18.892px;font-weight:400;color:#9ca3af;transform:scaleX(0.9000)">14.53 min</div>
<div class="tx" style="left:445.93px;top:782.40px;font-size:15.509px;font-weight:400;color:#8cc2fc;-webkit-text-stroke:0.50px #8cc2fc;transform:scaleX(0.9539)">V4</div>
<div class="tx" style="left:622.33px;top:781.80px;font-size:18.895px;font-weight:400;color:#f3f4f6;-webkit-text-stroke:0.55px #f3f4f6;transform:scaleX(0.9022)">Review Fraud Risk</div>
<div class="tx" style="left:768.63px;top:786.05px;font-size:15.933px;font-weight:700;color:#9ca3af;font-family:&quot;Liberation Mono&quot;,monospace;transform:scaleX(0.8815)">(Task_FraudReview)</div>
<div class="tx" style="left:1377.14px;top:780.90px;font-size:19.186px;font-weight:400;color:#9ca3af;transform:scaleX(0.8900)">userTask</div>
<div class="tx" style="left:1877.78px;top:782.00px;font-size:18.892px;font-weight:400;color:#9ca3af;transform:scaleX(0.9000)">1</div>
<div class="tx" style="left:2099.39px;top:782.00px;font-size:18.892px;font-weight:700;color:#4b93f8;transform:scaleX(0.9000)">2.95 min</div>
<div class="tx" style="left:2383.77px;top:782.00px;font-size:18.892px;font-weight:400;color:#9ca3af;transform:scaleX(0.9000)">2.95 min</div>
<div class="tx" style="left:445.93px;top:845.40px;font-size:15.509px;font-weight:400;color:#8cc2fc;-webkit-text-stroke:0.50px #8cc2fc;transform:scaleX(0.9539)">V4</div>
<div class="tx" style="left:622.58px;top:844.80px;font-size:18.895px;font-weight:400;color:#f3f4f6;-webkit-text-stroke:0.55px #f3f4f6;transform:scaleX(0.9199)">Credit Check</div>
<div class="tx" style="left:726.13px;top:849.05px;font-size:15.933px;font-weight:700;color:#9ca3af;font-family:&quot;Liberation Mono&quot;,monospace;transform:scaleX(0.8815)">(Task_CreditCheck)</div>
<div class="tx" style="left:1377.14px;top:843.90px;font-size:19.186px;font-weight:400;color:#9ca3af;transform:scaleX(0.8900)">businessRuleTask</div>
<div class="tx" style="left:1868.57px;top:845.00px;font-size:18.892px;font-weight:400;color:#9ca3af;transform:scaleX(0.9000)">28</div>
<div class="tx" style="left:2128.34px;top:845.00px;font-size:18.892px;font-weight:700;color:#4b93f8;transform:scaleX(0.9000)">1 ms</div>
<div class="tx" style="left:2411.70px;top:845.00px;font-size:18.892px;font-weight:400;color:#9ca3af;transform:scaleX(0.9000)">2 ms</div>
<div class="tx" style="left:445.93px;top:1113.40px;font-size:15.509px;font-weight:400;color:#8cc2fc;-webkit-text-stroke:0.50px #8cc2fc;transform:scaleX(0.9539)">V4</div>
<div class="tx" style="left:626.53px;top:1112.70px;font-size:18.605px;font-weight:400;color:#f3f4f6;transform:scaleX(0.9203)">Validate Customer Data</div>
<div class="tx" style="left:810.81px;top:1116.45px;font-size:15.161px;font-weight:400;color:#9ca3af;font-family:&quot;Liberation Mono&quot;,monospace;transform:scaleX(0.9159)">(Task_ValidateCustomer)</div>
<div class="tx" style="left:1556.54px;top:1113.00px;font-size:18.892px;font-weight:400;color:#9ca3af;transform:scaleX(0.9000)">770</div>
<div class="tx" style="left:1814.59px;top:1113.00px;font-size:18.892px;font-weight:700;color:#4b93f8;transform:scaleX(0.9000)">1.25 h</div>
<div class="tx" style="left:2086.57px;top:1113.00px;font-size:18.892px;font-weight:400;color:#9ca3af;transform:scaleX(0.9000)">4.49 h</div>
<div class="tx" style="left:2182.94px;top:1113.45px;font-size:16.424px;font-weight:400;color:#fca5a5;-webkit-text-stroke:0.40px #fca5a5;transform:scaleX(0.8480)">STUCK ACTIVITY</div>
<div class="tx" style="left:445.93px;top:1176.40px;font-size:15.509px;font-weight:400;color:#8cc2fc;-webkit-text-stroke:0.50px #8cc2fc;transform:scaleX(0.9539)">V4</div>
<div class="tx" style="left:625.06px;top:1175.70px;font-size:18.605px;font-weight:400;color:#f3f4f6;transform:scaleX(0.9185)">Fraud Screening</div>
<div class="tx" style="left:753.89px;top:1179.45px;font-size:15.161px;font-weight:400;color:#9ca3af;font-family:&quot;Liberation Mono&quot;,monospace;transform:scaleX(0.9260)">(Task_FraudCheck)</div>
<div class="tx" style="left:1556.58px;top:1176.00px;font-size:18.892px;font-weight:400;color:#9ca3af;transform:scaleX(0.9000)">298</div>
<div class="tx" style="left:1814.59px;top:1176.00px;font-size:18.892px;font-weight:700;color:#4b93f8;transform:scaleX(0.9000)">1.16 h</div>
<div class="tx" style="left:2086.57px;top:1176.00px;font-size:18.892px;font-weight:400;color:#9ca3af;transform:scaleX(0.9000)">4.28 h</div>
<div class="tx" style="left:2182.94px;top:1176.45px;font-size:16.424px;font-weight:400;color:#fca5a5;-webkit-text-stroke:0.40px #fca5a5;transform:scaleX(0.8480)">STUCK ACTIVITY</div>
<div class="tx" style="left:445.93px;top:1239.40px;font-size:15.509px;font-weight:400;color:#8cc2fc;-webkit-text-stroke:0.50px #8cc2fc;transform:scaleX(0.9539)">V4</div>
<div class="tx" style="left:625.69px;top:1238.70px;font-size:18.605px;font-weight:400;color:#f3f4f6;transform:scaleX(0.9285)">Create Customer Account</div>
<div class="tx" style="left:826.60px;top:1242.45px;font-size:15.161px;font-weight:400;color:#9ca3af;font-family:&quot;Liberation Mono&quot;,monospace;transform:scaleX(0.9222)">(Task_CreateAccount)</div>
<div class="tx" style="left:1566.30px;top:1239.00px;font-size:18.892px;font-weight:400;color:#9ca3af;transform:scaleX(0.9000)">19</div>
<div class="tx" style="left:1785.20px;top:1239.00px;font-size:18.892px;font-weight:700;color:#4b93f8;transform:scaleX(0.9000)">16.40 min</div>
<div class="tx" style="left:2058.94px;top:1239.00px;font-size:18.892px;font-weight:400;color:#9ca3af;transform:scaleX(0.9000)">20.62 min</div>
<div class="tx" style="left:2182.94px;top:1239.45px;font-size:16.424px;font-weight:400;color:#fca5a5;-webkit-text-stroke:0.40px #fca5a5;transform:scaleX(0.8480)">STUCK ACTIVITY</div>
<div style="position:absolute;left:0;top:0;width:2528px;height:915px;overflow:hidden">
<div class="tx" style="left:445.93px;top:908.40px;font-size:15.509px;font-weight:400;color:#8cc2fc;-webkit-text-stroke:0.50px #8cc2fc;transform:scaleX(0.9539)">V4</div>
<div class="tx" style="left:622.30px;top:907.80px;font-size:18.895px;font-weight:400;color:#f3f4f6;-webkit-text-stroke:0.55px #f3f4f6;transform:scaleX(0.9300)">Fraud Cleared?</div>
<div class="tx" style="left:744.68px;top:912.05px;font-size:15.933px;font-weight:700;color:#9ca3af;font-family:&quot;Liberation Mono&quot;,monospace;transform:scaleX(0.8604)">(Gateway_FraudDecision)</div>
<div class="tx" style="left:1377.29px;top:906.90px;font-size:19.186px;font-weight:400;color:#9ca3af;transform:scaleX(0.8900)">exclusiveGateway</div>
<div class="tx" style="left:1877.78px;top:908.00px;font-size:18.892px;font-weight:400;color:#9ca3af;transform:scaleX(0.9000)">1</div>
<div class="tx" style="left:2128.34px;top:908.00px;font-size:18.892px;font-weight:700;color:#4b93f8;transform:scaleX(0.9000)">1 ms</div>
<div class="tx" style="left:2411.70px;top:908.00px;font-size:18.892px;font-weight:400;color:#9ca3af;transform:scaleX(0.9000)">1 ms</div>
</div>
</body></html>
